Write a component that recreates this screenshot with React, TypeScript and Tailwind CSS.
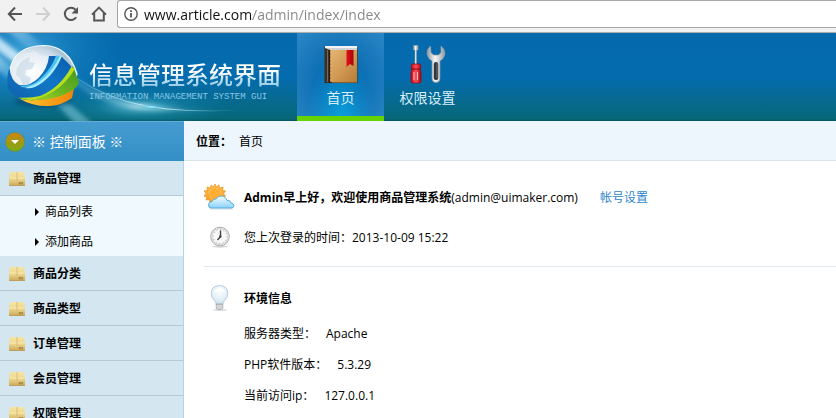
import React from "react";

const menu = [
  { name: "商品管理", children: ["商品列表", "添加商品"] },
  { name: "商品分类" },
  { name: "商品类型" },
  { name: "订单管理" },
  { name: "会员管理" },
  { name: "权限管理" },
];

const environment = [
  ["服务器类型：", "Apache"],
  ["PHP软件版本：", "5.3.29"],
  ["当前访问ip：", "127.0.0.1"],
];

function BrowserButton({ label, muted, children }: { label: string; muted?: boolean; children: React.ReactNode }) {
  return (
    <button type="button" aria-label={label} className={muted ? "text-[#cfcfcf]" : "text-[#555]"}>
      <svg width="16" height="16" viewBox="0 0 16 16" fill="none" stroke="currentColor" strokeWidth="2">
        {children}
      </svg>
    </button>
  );
}

function BrowserBar() {
  return (
    <div className="flex h-[33px] shrink-0 items-start border-b border-[#adadad] bg-[#f1f1f1]">
      <div className="flex h-7 w-[117px] shrink-0 items-center gap-3 pl-[7px]">
        <BrowserButton label="Back">
          <path d="M15 8H2M8 1.5 1.8 8 8 14.5" />
        </BrowserButton>
        <BrowserButton label="Forward" muted>
          <path d="M1 8h13M8 1.5 14.2 8 8 14.5" />
        </BrowserButton>
        <BrowserButton label="Reload">
          <path d="M13.2 11.3A6.2 6.2 0 1 1 12.6 3.6" />
          <path d="M15 1v6.5H8.5z" fill="currentColor" stroke="none" />
        </BrowserButton>
        <BrowserButton label="Home">
          <path d="M1 8.6 8 1.6l7 7M3.2 7v7.6h9.6V7" />
        </BrowserButton>
      </div>
      <div className="flex h-7 min-w-0 flex-1 items-center gap-1.5 rounded-l-[3px] border border-r-0 border-[#a6a6a6] bg-white pl-1.5">
        <svg className="shrink-0" width="14" height="14" viewBox="0 0 14 14" fill="none" stroke="#555" strokeWidth="1.4">
          <circle cx="7" cy="7" r="6.2" />
          <path d="M7 6v4.6M7 3.2v1.8" strokeWidth="1.8" />
        </svg>
        <input
          type="text"
          aria-label="Address"
          defaultValue="www.article.com/admin/index/index"
          className="h-6 min-w-0 flex-1 bg-[linear-gradient(to_right,#111_108px,#858585_108px)] bg-clip-text font-['Open_Sans','Noto_Sans',sans-serif] text-sm text-transparent outline-none"
        />
      </div>
    </div>
  );
}

function HeaderGlow() {
  return (
    <svg className="absolute top-0 left-0" width="297" height="88" viewBox="0 0 297 88" aria-hidden="true">
      <defs>
        <linearGradient id="ray" x1="0" y1="0" x2="1" y2="1">
          <stop offset="0" stopColor="#e6f6ff" stopOpacity=".9" />
          <stop offset=".3" stopColor="#8fd3f5" stopOpacity=".6" />
          <stop offset="1" stopColor="#5fc4ee" stopOpacity="0" />
        </linearGradient>
        <radialGradient id="flare">
          <stop offset="0" stopColor="#d9fbff" />
          <stop offset=".2" stopColor="#7edcf5" stopOpacity=".7" />
          <stop offset=".5" stopColor="#2fb0dd" stopOpacity=".3" />
          <stop offset="1" stopColor="#1b9bd0" stopOpacity="0" />
        </radialGradient>
        <radialGradient id="corner">
          <stop offset="0" stopColor="#4cb2e6" stopOpacity=".7" />
          <stop offset="1" stopColor="#1684c4" stopOpacity="0" />
        </radialGradient>
        <linearGradient id="arc" x1="0" x2="1">
          <stop offset="0" stopColor="#8edcf7" stopOpacity=".3" />
          <stop offset=".5" stopColor="#dffaff" stopOpacity=".9" />
          <stop offset="1" stopColor="#4fb9dc" stopOpacity="0" />
        </linearGradient>
        <filter id="soft" x="-20%" y="-20%" width="140%" height="140%">
          <feGaussianBlur stdDeviation="2" />
        </filter>
      </defs>
      <ellipse cx="20" cy="18" rx="100" ry="70" fill="url(#corner)" />
      <ellipse cx="140" cy="74" rx="90" ry="22" fill="url(#flare)" opacity=".6" />
      <g filter="url(#soft)">
        <path d="M-4 2-4 16 20 34 26 26Z" fill="#e2f4ff" opacity=".8" />
        <path d="M-4 20-4 36 42 70 50 65Z" fill="url(#ray)" opacity=".7" />
        <path d="M6-4 24-4 82 50 74 56Z" fill="url(#ray)" opacity=".5" />
        <path d="M52 66 76 92 94 92 62 64Z" fill="#8fd6e6" opacity=".5" />
        <path d="M76 44Q105 66 146 72T225 77Q180 80 140 76T76 52Z" fill="url(#arc)" opacity=".6" />
      </g>
      <path d="M78 46Q108 66 146 73T240 77" fill="none" stroke="url(#arc)" strokeWidth="1" />
      <ellipse cx="151" cy="74" rx="18" ry="3" fill="url(#flare)" />
    </svg>
  );
}

function Logo() {
  return (
    <svg className="shrink-0" width="74" height="66" viewBox="0 0 74 66" aria-hidden="true">
      <defs>
        <radialGradient id="glass" cx=".35" cy=".5" r=".65">
          <stop offset="0" stopColor="#ffffff" />
          <stop offset=".55" stopColor="#e3ecf3" />
          <stop offset=".85" stopColor="#a9c2d4" />
          <stop offset="1" stopColor="#dcebf5" />
        </radialGradient>
        <linearGradient id="band" x1="0" y1="1" x2="1" y2="0">
          <stop offset="0" stopColor="#0f62ae" />
          <stop offset=".5" stopColor="#1277c6" />
          <stop offset="1" stopColor="#0a5cae" />
        </linearGradient>
        <linearGradient id="leaf" x1="0" y1="1" x2="1" y2="0">
          <stop offset="0" stopColor="#b9dc1c" />
          <stop offset=".45" stopColor="#6fb722" />
          <stop offset="1" stopColor="#3f961d" />
        </linearGradient>
        <linearGradient id="orange" x1="0" x2="1">
          <stop offset="0" stopColor="#ffcf3a" />
          <stop offset=".5" stopColor="#f9a51c" />
          <stop offset="1" stopColor="#ee8508" />
        </linearGradient>
        <filter id="shade" x="-20%" y="-50%" width="140%" height="200%">
          <feGaussianBlur stdDeviation="2" />
        </filter>
      </defs>
      <ellipse cx="36" cy="58" rx="29" ry="5" fill="#063f63" opacity=".6" filter="url(#shade)" />
      <path d="M3 25Q8 2 37 1.500Q62 2 70 30Q66 52 36 54Q4 52 3 25z" fill="url(#glass)" stroke="#f3faff" strokeWidth="1.200" />
      <path d="M10 24q5-9 13-11l-1 5 6 1-3 6-6 1-1 5 6 3-2 6-6 1-3-7-4-3z" fill="#b9cfe0" opacity=".5" />
      <path d="M28 6q10-3 17 2l-3 4-9-1z" fill="#c9dae7" opacity=".5" />
      <path d="M67 44 65 54Q55 61 43 62Q27 63 13 55Q40 60 67 44z" fill="url(#orange)" />
      <path d="M66 22 72 38Q70 44 64 47Q45 59 13 55Q42 50 66 22z" fill="url(#leaf)" />
      <path d="M63 22 68 25Q52 51 24 56L11 54Q43 51 63 22z" fill="#b7e01c" />
      <path d="M2.500 24Q0 30 .3 38Q0 48 10 53Q20 55 33 52Q53 44 64.500 22.500L54 12H42Q41 24 31.500 34Q22 43 12 41Q4 37 2.500 24z" fill="url(#band)" />
      <path d="M49 11.500 53 12Q44 34 25 42Q18 45 13 42Q25 43 34 34Q45 24 49 11.500z" fill="#4cc3f2" />
      <path d="M53 11.500 55 12Q46 34 28 43Q23 45 18 44Q41 38 53 11.500z" fill="#a5ecfc" />
    </svg>
  );
}

function BookIcon() {
  return (
    <svg width="36" height="40" viewBox="0 0 36 40" aria-hidden="true">
      <defs>
        <linearGradient id="cover" x1="0" y1="0" x2="1" y2="1">
          <stop offset="0" stopColor="#e7b575" />
          <stop offset=".5" stopColor="#d19a55" />
          <stop offset="1" stopColor="#b67c38" />
        </linearGradient>
        <linearGradient id="ribbon" x1="0" x2="1">
          <stop offset="0" stopColor="#e5121b" />
          <stop offset="1" stopColor="#a80208" />
        </linearGradient>
      </defs>
      <path d="M1.500 2h32l1 3v34H1.500z" fill="#4b2c12" />
      <path d="M2 2h32v4H2z" fill="#f2f3f4" />
      <path d="M3 5h31" stroke="#9aa1a6" strokeWidth=".8" />
      <path d="M7 6h27v32H7z" fill="url(#cover)" />
      <path d="M2 4l5 2v33H2z" fill="#3b3028" />
      <path d="M4.500 6v32" stroke="#77685a" strokeWidth="1" />
      <path d="M6.800 6v33" stroke="#1d130c" strokeWidth="1" />
      <path d="M7.800 7v31" stroke="#edaa55" strokeWidth="1" strokeDasharray="2 1.500" />
      <path d="M9 38.500h25" stroke="#8c5a25" />
      <path d="M23.500 6h7v16l-3.500-2-3.500 3z" fill="url(#ribbon)" />
    </svg>
  );
}

function ToolsIcon() {
  return (
    <svg width="36" height="40" viewBox="2 0 36 40" aria-hidden="true">
      <defs>
        <linearGradient id="steel" x1="0" x2="1">
          <stop offset="0" stopColor="#8b969e" />
          <stop offset=".45" stopColor="#f5f7f8" />
          <stop offset="1" stopColor="#929ca4" />
        </linearGradient>
        <linearGradient id="handle" x1="0" x2="1">
          <stop offset="0" stopColor="#c70a16" />
          <stop offset=".5" stopColor="#fb5159" />
          <stop offset="1" stopColor="#a90510" />
        </linearGradient>
      </defs>
      <path d="M5.500 1.500h4.500V6H8.500V21h-1.500V6H5.500z" fill="url(#steel)" stroke="#9aa6ae" strokeWidth=".5" />
      <path d="M4 20h8l1 3-1 2 1 3v9q0 2-2 2H5q-2 0-2-2v-9l1-3-1-2z" fill="url(#handle)" stroke="#93020b" strokeWidth=".7" />
      <path d="M3.500 25h9" stroke="#85050d" strokeWidth="1" />
      <path d="M6 28v8M9.500 28v8" stroke="#ffc0c2" strokeWidth="1" />
      <path
        d="M22.500 2Q18.500 5 19 10Q20 15 24 17V34.500q0 4 4 4t4-4V17q4-2 5-7Q37 5 33 2V8.500L30.500 11h-5l-2.500-2.500z"
        fill="url(#steel)"
        stroke="#8b97a0"
        strokeWidth=".7"
      />
      <rect x="25.800" y="18" width="4.400" height="18" rx="2" fill="#30363b" />
      <path d="M29 19v15" stroke="#7d858b" strokeWidth=".8" />
    </svg>
  );
}

function NavItem({ label, active, children }: { label: string; active?: boolean; children: React.ReactNode }) {
  return (
    <a
      href="#"
      className={
        active
          ? "flex w-[87px] flex-col items-center border-b-[5px] border-[#66d200] bg-[radial-gradient(ellipse_at_50%_100%,#0aa0dc_0%,#0aa0dc00_55%),radial-gradient(ellipse_at_50%_55%,#0468ae_20%,#2c87c6_100%)] bg-origin-border pt-[11px]"
          : "flex w-[87px] flex-col items-center pt-[11px]"
      }
    >
      {children}
      <span className="mt-1 text-sm leading-5 text-[#d9eef8]">{label}</span>
    </a>
  );
}

function Header() {
  return (
    <header className="relative flex h-[88px] shrink-0 bg-[linear-gradient(to_bottom,#066aad_0%,#046cae_50%,#066a92_75%,#076879_97%,#045563_100%)]">
      <HeaderGlow />
      <a href="#" className="relative flex w-[297px] shrink-0 items-center gap-2 pl-[7px]">
        <Logo />
        <span className="flex flex-col gap-0.5 pt-1.5">
          <span className="bg-linear-to-b from-white from-40% to-[#9fd0ea] to-80% bg-clip-text text-2xl leading-8 font-medium text-transparent">
            信息管理系统界面
          </span>
          <span className="font-['Liberation_Mono',monospace] text-[9px] leading-2 whitespace-nowrap text-[#86c6e6]">
            INFORMATION MANAGEMENT SYSTEM GUI
          </span>
        </span>
      </a>
      <nav className="relative flex">
        <NavItem label="首页" active>
          <BookIcon />
        </NavItem>
        <NavItem label="权限设置">
          <ToolsIcon />
        </NavItem>
      </nav>
    </header>
  );
}

function BoxIcon() {
  return (
    <svg className="shrink-0" width="16" height="14" viewBox="0 0 16 14" aria-hidden="true">
      <defs>
        <linearGradient id="carton" x1="0" y1="0" x2="0" y2="1">
          <stop offset="0" stopColor="#f6e5a6" />
          <stop offset=".5" stopColor="#edd68c" />
          <stop offset="1" stopColor="#c9a75b" />
        </linearGradient>
      </defs>
      <path d="M1 0h14l1 6v8H0V6z" fill="url(#carton)" />
      <path d="M.5 6h15" stroke="#fbf0c4" strokeWidth=".8" />
      <path d="M8 0v9" stroke="#d9bd74" strokeWidth="1" />
      <path d="M0 13.500h16" stroke="#bf9e59" />
      <path d="M10.500 10v2.500M12 10v2.500M13.500 10v2.500M9.500 11h4.500" stroke="#9b7b3a" strokeWidth=".7" />
    </svg>
  );
}

function Sidebar() {
  return (
    <aside className="w-[184px] shrink-0">
      <h2 className="flex h-10 items-center gap-[7px] border-t border-[#62acd8] bg-linear-to-b from-[#459bd0] to-[#328fc6] pl-[5px] text-sm text-white">
        <svg width="20" height="20" viewBox="0 0 20 20" aria-hidden="true">
          <defs>
            <linearGradient id="toggle" x1="0" y1="0" x2="0" y2="1">
              <stop offset="0" stopColor="#cf8412" />
              <stop offset="1" stopColor="#77ad13" />
            </linearGradient>
          </defs>
          <circle cx="10" cy="10" r="9.600" fill="url(#toggle)" stroke="#5b8a5c" strokeWidth=".6" />
          <path d="M6 8h8l-4 4z" fill="#fff" />
        </svg>
        ※ 控制面板 ※
      </h2>
      <ul className="border-r border-[#b7d5df] bg-[#d4e6ef]">
        {menu.map((item) => (
          <li key={item.name}>
            <a href="#" className="flex h-[35px] items-center gap-2 border-b border-[#b5cad5] pt-0.5 pl-[9px] font-bold">
              <BoxIcon />
              {item.name}
            </a>
            {item.children && (
              <ul className="bg-[#f0f9fd]">
                {item.children.map((child) => (
                  <li key={child}>
                    <a href="#" className="flex h-[30px] items-center gap-1.5 pt-0.5 pl-[35px]">
                      <svg width="4" height="8" viewBox="0 0 4 8" aria-hidden="true">
                        <path d="M0 0 4 4 0 8z" />
                      </svg>
                      {child}
                    </a>
                  </li>
                ))}
              </ul>
            )}
          </li>
        ))}
      </ul>
    </aside>
  );
}

function WeatherIcon() {
  return (
    <svg width="32" height="26" viewBox="0 0 32 26" aria-hidden="true">
      <defs>
        <linearGradient id="sun" x1="0" y1="0" x2="0" y2="1">
          <stop offset="0" stopColor="#ffc04d" />
          <stop offset="1" stopColor="#f79a1c" />
        </linearGradient>
        <linearGradient id="cloud" x1="0" y1="0" x2="0" y2="1">
          <stop offset="0" stopColor="#f5fcff" />
          <stop offset="1" stopColor="#8bd2f8" />
        </linearGradient>
      </defs>
      <path
        d="m11 0 1.500 3L15 1l.5 3 3.500-1-.5 3.500 3 .5-2 2.500 2 2.500-3 1 1 3-3.500-.5-.5 3.500-3-2-1.500 3-2-3-3 2-.5-3.500-3.500.5 1-3-3-1L2 9.500 0 7l3.500-.5L3 3l3.500 1L7 1l2.500 2z"
        fill="url(#sun)"
        stroke="#e98c18"
        strokeWidth=".7"
      />
      <circle cx="11" cy="10" r="6" fill="#ffad33" stroke="#fbc266" strokeWidth=".8" />
      <path d="M6 25h23" stroke="#a9b8c2" strokeWidth="1" opacity=".5" />
      <path
        d="M7 24q-2.500 0-2.500-3t3.500-3.500q1-3 4-2.500 1.500-3 5.500-3t5.500 4.500q4-.5 4 2.500 3 .5 3 2.500T27.500 24z"
        fill="url(#cloud)"
        stroke="#4ba7dc"
        strokeWidth=".9"
      />
    </svg>
  );
}

function ClockIcon() {
  return (
    <svg width="22" height="22" viewBox="0 0 22 22" aria-hidden="true">
      <ellipse cx="11" cy="20.500" rx="8" ry="1.200" fill="#bbb" opacity=".6" />
      <circle cx="11" cy="10.500" r="9.300" fill="#f9f9f9" stroke="#a9a9a9" strokeWidth="1" />
      <circle cx="11" cy="10.500" r="8" fill="none" stroke="#d8d8d8" strokeWidth="1.400" />
      <circle cx="11" cy="10.500" r="6.800" fill="none" stroke="#8a8a8a" strokeWidth="1" strokeDasharray=".6 2.960" />
      <path d="M11.500 4.500v6L8.500 14" fill="none" stroke="#3f4348" strokeWidth="1.400" />
      <circle cx="11.300" cy="10.500" r="1.200" fill="#3f4348" />
    </svg>
  );
}

function BulbIcon() {
  return (
    <svg width="20" height="26" viewBox="0 0 20 26" aria-hidden="true">
      <defs>
        <radialGradient id="bulb" cx=".5" cy=".3" r=".7">
          <stop offset="0" stopColor="#fbfdff" />
          <stop offset=".7" stopColor="#e1eef7" />
          <stop offset="1" stopColor="#c5dbe9" />
        </radialGradient>
      </defs>
      <ellipse cx="10" cy="25" rx="7" ry="1" fill="#bbb" opacity=".5" />
      <path d="M9.500 .6Q17.800.8 17.800 8.500q0 4-3.300 7-1.500 1.500-1.700 4H6.200q-.2-2.500-1.700-4-3.300-3-3.300-7Q1.200.8 9.500.6z" fill="url(#bulb)" stroke="#b9ccd9" strokeWidth="1" />
      <path d="M4 8Q4.500 3.500 9.500 3t5.500 5Q9.500 5.500 4 8z" fill="#fff" opacity=".8" />
      <path d="M6.200 19h6.600v4.500q-3 2-6.600 0z" fill="#c4c6c8" stroke="#999da0" strokeWidth=".7" />
      <path d="M6.500 21h6M6.500 23h6" stroke="#f1f1f1" strokeWidth=".7" />
    </svg>
  );
}

function InfoRow({ icon, children }: { icon: React.ReactNode; children: React.ReactNode }) {
  return (
    <div className="flex h-10 items-center gap-2">
      <span className="flex w-8 shrink-0 justify-center">{icon}</span>
      {children}
    </div>
  );
}

function Content() {
  return (
    <main className="min-w-0 flex-1 bg-white">
      <div className="flex h-10 items-center gap-[7px] border-b border-[#d7e4ea] bg-[#edf6fd] pt-0.5 pl-3">
        <b>位置：</b>
        <a href="#">首页</a>
      </div>
      <section className="ml-5 border-b border-[#dfe9ee] pt-4 pb-[9px]">
        <InfoRow icon={<WeatherIcon />}>
          <p className="pt-0.5">
            <b>Admin早上好，欢迎使用商品管理系统</b>(admin@uimaker.com)
          </p>
          <a href="#" className="ml-3.5 pt-0.5 text-[#2f86cc]">
            帐号设置
          </a>
        </InfoRow>
        <InfoRow icon={<ClockIcon />}>
          <p className="pt-0.5">您上次登录的时间：2013-10-09 15:22</p>
        </InfoRow>
      </section>
      <section className="ml-5 pt-[11px]">
        <InfoRow icon={<BulbIcon />}>
          <h3 className="pt-0.5 font-bold">环境信息</h3>
        </InfoRow>
        <dl className="pl-10">
          {environment.map(([term, value]) => (
            <div key={term} className="flex h-[31px] items-center gap-2.5">
              <dt>{term}</dt>
              <dd>{value}</dd>
            </div>
          ))}
        </dl>
      </section>
    </main>
  );
}

export default function App() {
  return (
    <div className="flex min-h-screen flex-col bg-white font-['Open_Sans','Noto_Sans_CJK_SC',sans-serif] text-xs text-black">
      <BrowserBar />
      <Header />
      <div className="flex flex-1">
        <Sidebar />
        <Content />
      </div>
    </div>
  );
}
